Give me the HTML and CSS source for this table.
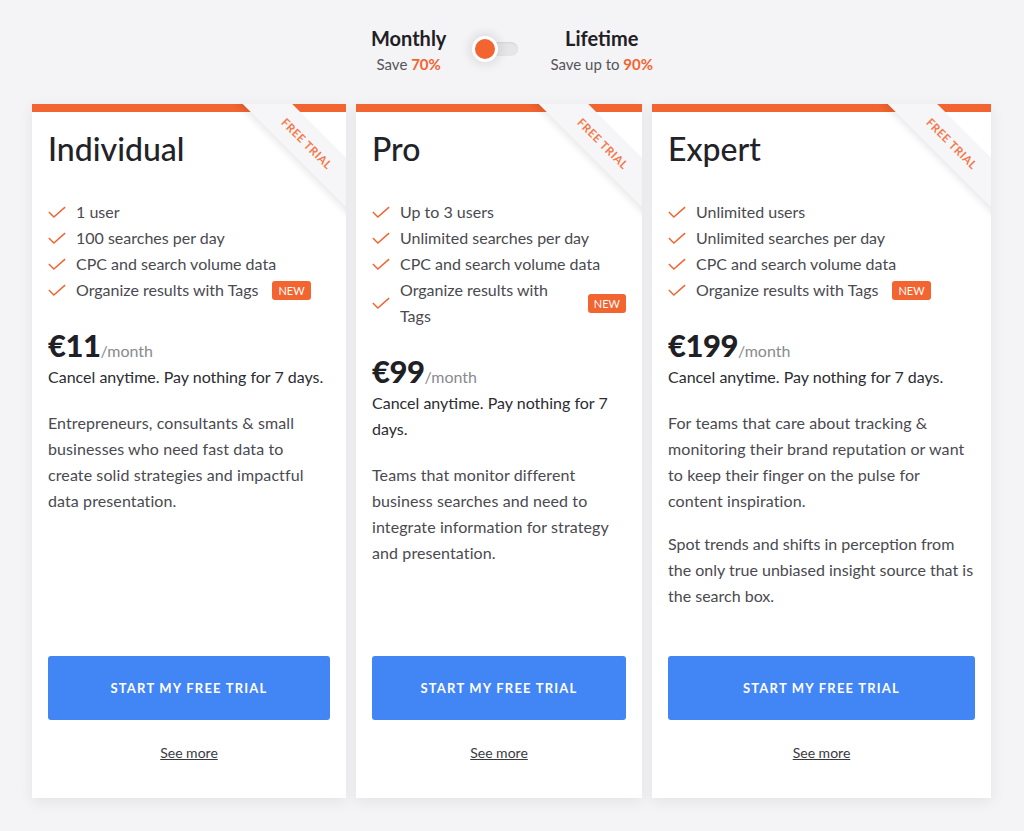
FILE: index.html
```html
<!DOCTYPE html>
<html lang="en">
<head>
<meta charset="utf-8">
<title>Pricing</title>
<link rel="stylesheet" href="styles.css">
</head>
<body>
<header class="switcher">
  <div class="period">
    <div class="period-name">Monthly</div>
    <div class="period-save">Save <b>70%</b></div>
  </div>
  <div class="toggle"><span class="track"></span><span class="knob"></span></div>
  <div class="period">
    <div class="period-name">Lifetime</div>
    <div class="period-save">Save up to <b>90%</b></div>
  </div>
</header>

<main class="plans">
  <section class="card card-individual">
    <div class="ribbon-wrap"><div class="ribbon">FREE TRIAL</div></div>
    <h2 class="title">Individual</h2>
    <ul class="features">
      <li><svg class="check" viewBox="0 0 20 14"><polyline points="1,6.5 6.5,12 19,1"/></svg><span>1 user</span></li>
      <li><svg class="check" viewBox="0 0 20 14"><polyline points="1,6.5 6.5,12 19,1"/></svg><span>100 searches per day</span></li>
      <li><svg class="check" viewBox="0 0 20 14"><polyline points="1,6.5 6.5,12 19,1"/></svg><span>CPC and search volume data</span></li>
      <li><svg class="check" viewBox="0 0 20 14"><polyline points="1,6.5 6.5,12 19,1"/></svg><span>Organize results with Tags</span><em class="badge">NEW</em></li>
    </ul>
    <div class="price"><strong>€11</strong><span>/month</span></div>
    <p class="cancel">Cancel anytime. Pay nothing for 7 days.</p>
    <p class="desc">Entrepreneurs, consultants &amp; small businesses who need fast data to create solid strategies and impactful data presentation.</p>
    <a class="cta" href="#">START MY FREE TRIAL</a>
    <a class="more" href="#">See more</a>
  </section>

  <section class="card card-pro">
    <div class="ribbon-wrap"><div class="ribbon">FREE TRIAL</div></div>
    <h2 class="title">Pro</h2>
    <ul class="features">
      <li><svg class="check" viewBox="0 0 20 14"><polyline points="1,6.5 6.5,12 19,1"/></svg><span>Up to 3 users</span></li>
      <li><svg class="check" viewBox="0 0 20 14"><polyline points="1,6.5 6.5,12 19,1"/></svg><span>Unlimited searches per day</span></li>
      <li><svg class="check" viewBox="0 0 20 14"><polyline points="1,6.5 6.5,12 19,1"/></svg><span>CPC and search volume data</span></li>
      <li class="wrap"><svg class="check" viewBox="0 0 20 14"><polyline points="1,6.5 6.5,12 19,1"/></svg><span class="narrow">Organize results with Tags</span><em class="badge badge-end">NEW</em></li>
    </ul>
    <div class="price"><strong>€99</strong><span>/month</span></div>
    <p class="cancel">Cancel anytime. Pay nothing for 7 days.</p>
    <p class="desc">Teams that monitor different business searches and need to integrate information for strategy and presentation.</p>
    <a class="cta" href="#">START MY FREE TRIAL</a>
    <a class="more" href="#">See more</a>
  </section>

  <section class="card card-expert">
    <div class="ribbon-wrap"><div class="ribbon">FREE TRIAL</div></div>
    <h2 class="title">Expert</h2>
    <ul class="features">
      <li><svg class="check" viewBox="0 0 20 14"><polyline points="1,6.5 6.5,12 19,1"/></svg><span>Unlimited users</span></li>
      <li><svg class="check" viewBox="0 0 20 14"><polyline points="1,6.5 6.5,12 19,1"/></svg><span>Unlimited searches per day</span></li>
      <li><svg class="check" viewBox="0 0 20 14"><polyline points="1,6.5 6.5,12 19,1"/></svg><span>CPC and search volume data</span></li>
      <li><svg class="check" viewBox="0 0 20 14"><polyline points="1,6.5 6.5,12 19,1"/></svg><span>Organize results with Tags</span><em class="badge">NEW</em></li>
    </ul>
    <div class="price"><strong>€199</strong><span>/month</span></div>
    <p class="cancel">Cancel anytime. Pay nothing for 7 days.</p>
    <p class="desc">For teams that care about tracking &amp; monitoring their brand reputation or want to keep their finger on the pulse for content inspiration.</p>
    <p class="desc desc-second">Spot trends and shifts in perception from the only true unbiased insight source that is the search box.</p>
    <a class="cta" href="#">START MY FREE TRIAL</a>
    <a class="more" href="#">See more</a>
  </section>
</main>
</body>
</html>
```

FILE: styles.css
```css
* { box-sizing: border-box; }

html, body {
  margin: 0;
  padding: 0;
}

body {
  width: 1024px;
  height: 831px;
  overflow: hidden;
  background: #f4f3f5;
  font-family: Lato, "Noto Sans", "Liberation Sans", sans-serif;
  color: #3d3d42;
}

.switcher {
  height: 104px;
  display: flex;
  justify-content: center;
  align-items: flex-start;
  padding-top: 25px;
}

.period {
  text-align: center;
}

.period-name {
  font-size: 20px;
  font-weight: 700;
  line-height: 26px;
  color: #1f2025;
}

.period-save {
  font-size: 15px;
  line-height: 20px;
  margin-top: 3px;
  color: #555559;
}

.period-save b {
  color: #f26430;
  font-weight: 700;
}

.toggle {
  position: relative;
  width: 46px;
  height: 26px;
  margin: 11px 32px 0 26px;
}

.toggle .track {
  position: absolute;
  left: 8px;
  top: 6px;
  width: 38px;
  height: 14px;
  border-radius: 7px;
  background: #e6e6e8;
  box-shadow: inset 0 1px 2px rgba(0,0,0,0.08);
}

.toggle .knob {
  position: absolute;
  left: 0;
  top: 0;
  width: 26px;
  height: 26px;
  border-radius: 50%;
  background: #f26430;
  border: 3px solid #fff;
  box-shadow: 0 0 8px 4px rgba(0,0,0,0.08);
}

.plans {
  display: grid;
  grid-template-columns: 314px 286px 339px;
  gap: 10px;
  padding-left: 32px;
  height: 694px;
}

.card {
  position: relative;
  background: #fff;
  border-top: 8px solid #f26430;
  padding: 15px 16px 35px;
  display: flex;
  flex-direction: column;
  box-shadow: 0 4px 14px rgba(0,0,0,0.07);
}

.ribbon-wrap {
  position: absolute;
  top: -8px;
  right: 0;
  width: 112px;
  height: 112px;
  overflow: hidden;
}

.ribbon {
  position: absolute;
  left: -12px;
  top: 22px;
  width: 170px;
  height: 35px;
  transform: rotate(45deg);
  background: #f6f6f8;
  box-shadow: 0 4px 6px rgba(0,0,0,0.08);
  color: #f47a4c;
  font-size: 11.5px;
  font-weight: 700;
  letter-spacing: 0.5px;
  text-align: center;
  line-height: 35px;
}

.title {
  margin: 0;
  font-size: 32px;
  font-weight: 500;
  line-height: 44px;
  color: #222328;
}

.features {
  list-style: none;
  margin: 28px 0 0;
  padding: 0;
}

.features li {
  display: flex;
  align-items: center;
  font-size: 16px;
  line-height: 26px;
  color: #4a4a50;
}

.check {
  width: 18px;
  height: 13px;
  flex: none;
  margin-right: 10px;
  fill: none;
  stroke: #f26430;
  stroke-width: 1.6;
}

.narrow {
  width: 160px;
}

.badge {
  font-style: normal;
  margin-left: 14px;
  background: #f26430;
  color: #fff;
  font-size: 11px;
  line-height: 19px;
  padding: 0 6px;
  border-radius: 3px;
}

.badge-end {
  margin-left: auto;
  align-self: center;
}

.price {
  margin-top: 23px;
  height: 38px;
  display: flex;
  align-items: baseline;
}

.price strong {
  font-size: 31px;
  line-height: 38px;
  font-weight: 900;
  color: #1f2025;
  letter-spacing: -0.5px;
}

.price span {
  font-size: 16px;
  line-height: 38px;
  color: #8a8a90;
}

.cancel {
  margin: 0;
  font-size: 16px;
  line-height: 26px;
  color: #2c2c31;
}

.desc {
  margin: 20px 0 0;
  font-size: 16px;
  line-height: 26px;
  letter-spacing: 0.1px;
  color: #4a4a50;
}

.desc-second {
  margin-top: 17px;
  letter-spacing: 0;
}

.cta {
  margin-top: auto;
  display: block;
  height: 64px;
  line-height: 64px;
  background: #4285f4;
  border-radius: 3px;
  color: #fff;
  text-align: center;
  text-decoration: none;
  font-size: 13px;
  font-weight: 700;
  letter-spacing: 1.2px;
}

.more {
  margin-top: 23px;
  align-self: center;
  font-size: 14px;
  line-height: 20px;
  color: #3a3a40;
  text-decoration: underline;
}
```
